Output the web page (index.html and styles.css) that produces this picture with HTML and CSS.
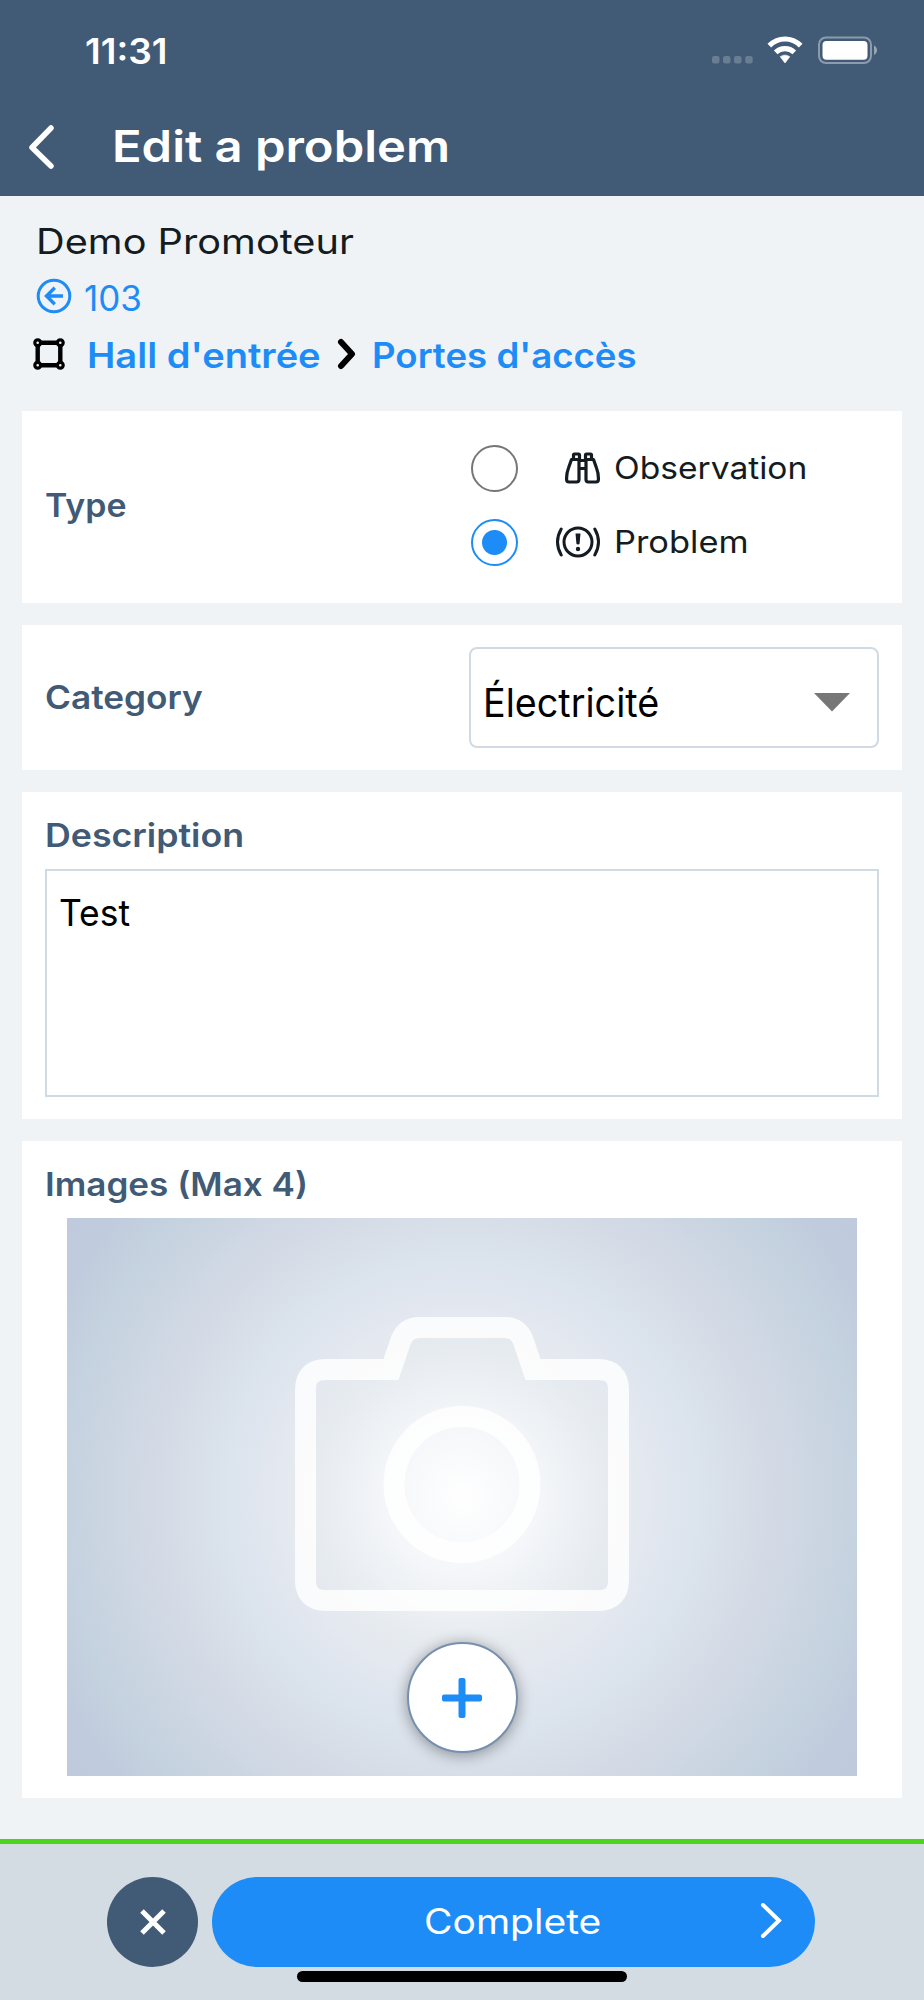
FILE: index.html
```
<!DOCTYPE html>
<html lang="en">
<head>
<meta charset="utf-8">
<title>Edit a problem</title>
<link rel="stylesheet" href="styles.css">
</head>
<body>
<header class="header">
  <div class="status">
    <span class="time">11:31</span>
    <svg class="status-icons" width="166" height="30" viewBox="0 0 166 30">
      <g fill="#fff" fill-opacity=".22">
        <rect x="1" y="20" width="7.5" height="7.5" rx="2.2"/><rect x="12" y="20" width="7.5" height="7.5" rx="2.2"/><rect x="23" y="20" width="7.5" height="7.5" rx="2.2"/><rect x="34.200" y="20" width="7.500" height="7.500" rx="2.2"/>
      </g>
      <g fill="none" stroke="#fff" stroke-width="5.200">
        <path d="M58.300 9.600C67.500.800 80.500.800 89.700 9.600"/>
        <path d="M64.700 16.300C70 11.400 78 11.400 83.300 16.300"/>
      </g>
      <path d="M69.200 20.700C72 18.600 76 18.600 78.800 20.700L74 27z" fill="#fff" stroke="#fff" stroke-width=".6"/>
      <rect x="108" y="1.500" width="52" height="25.500" rx="7" fill="none" stroke="#fff" stroke-opacity=".4" stroke-width="2"/>
      <rect x="111.500" y="5" width="45" height="18.700" rx="4" fill="#fff"/>
      <path d="M163 9.600C167 11.500 167 17 163 18.900z" fill="#fff" fill-opacity=".45"/>
    </svg>
  </div>
  <div class="nav">
    <svg class="back" width="30" height="46" viewBox="0 0 30 46"><path d="M23 4L4 23.500L23 42" fill="none" stroke="#fff" stroke-width="5.500" stroke-linecap="round" stroke-linejoin="round"/></svg>
    <h1 class="title">Edit a problem</h1>
  </div>
</header>

<main class="content">
  <section class="crumbs">
    <div class="row project"><span class="project-name">Demo Promoteur</span></div>
    <div class="row unit">
      <svg width="36" height="36" viewBox="0 0 36 36" fill="none" stroke="#1e8cf6" stroke-width="3"><circle cx="18" cy="18" r="15.800"/><path d="M27 18H11M18.800 9.700L10.500 18L18.800 26.300" stroke-width="3.400"/></svg>
      <span class="unit-no">103</span>
    </div>
    <div class="row path">
      <svg class="area" width="32" height="32" viewBox="0 0 32 32" fill="none" stroke="#000"><path d="M4.700 4.700H27.300V27.300H4.700z" stroke-width="4.400"/><g fill="#f0f3f6" stroke-width="3.200"><circle cx="4.700" cy="4.700" r="2.900"/><circle cx="27.300" cy="4.700" r="2.900"/><circle cx="4.700" cy="27.300" r="2.900"/><circle cx="27.300" cy="27.300" r="2.900"/></g></svg>
      <a class="hall">Hall d'entrée</a>
      <svg class="sep" width="20" height="32" viewBox="0 0 20 32"><path d="M4 4L15 16L4 28" fill="none" stroke="#000" stroke-width="6" stroke-linecap="round" stroke-linejoin="round"/></svg>
      <a class="door">Portes d'accès</a>
    </div>
  </section>

  <section class="card type-card">
    <h2 class="label type">Type</h2>
    <div class="options">
      <div class="option">
        <span class="radio"></span>
        <svg class="opt-icon" width="46" height="34" viewBox="0 0 46 34" fill="none" stroke="#141c22" stroke-width="3.200" stroke-linejoin="round"><path d="M16.500 8.500L13.500 17Q11.600 22 11.600 27V28.500Q11.600 31 14 31H21.500Q24 31 24 28.500V8.500zM38.500 8.500L41.500 17Q43.400 22 43.400 27V28.500Q43.400 31 41 31H33.500Q31 31 31 28.500V8.500zM18.500 8V4Q18.500 3 19.500 3H23.500Q24.500 3 24.500 4V8M30.500 8V4Q30.500 3 31.500 3H35.500Q36.500 3 36.500 4V8M24 9.500H31M24 17.500H31"/></svg>
        <span class="obs">Observation</span>
      </div>
      <div class="option">
        <span class="radio checked"></span>
        <svg class="opt-icon" width="46" height="34" viewBox="0 0 46 34" fill="none" stroke="#141c22" stroke-width="3" stroke-linecap="round"><circle cx="23" cy="17" r="14"/><path d="M6.200 4Q-1.200 17 6.200 30M39.800 4Q47.200 17 39.800 30"/><path d="M20.500 8.600H25.500L24.600 18.500Q24.500 19.500 23 19.500Q21.500 19.500 21.400 18.500z" fill="#141c22" stroke="none"/><circle cx="23" cy="24" r="2.200" fill="#141c22" stroke="none"/></svg>
        <span class="prob">Problem</span>
      </div>
    </div>
  </section>

  <section class="card category-card">
    <h2 class="label category">Category</h2>
    <div class="select">
      <span class="value">Électricité</span>
      <svg width="36" height="19" viewBox="0 0 36 19"><path d="M0 0H36L18 18.500z" fill="#777"/></svg>
    </div>
  </section>

  <section class="card description-card">
    <h2 class="label description">Description</h2>
    <div class="textarea"><span class="test">Test</span></div>
  </section>

  <section class="card images-card">
    <h2 class="label images">Images (Max 4)</h2>
    <div class="photo">
      <svg class="camera" width="336" height="296" viewBox="0 0 336 296" fill="none" stroke="#fff" stroke-opacity=".82" stroke-width="21">
        <path d="M97 53.500L107 24Q112.500 11.500 125 11.500H211Q223.500 11.500 229 24L239 53.500H304Q324.500 53.500 324.500 74V264Q324.500 284.500 304 284.500H32Q11.500 284.500 11.500 264V74Q11.500 53.500 32 53.500z"/>
        <circle cx="168" cy="168.500" r="68"/>
      </svg>
      <button class="add" aria-label="Add image"><svg width="42" height="42" viewBox="0 0 42 42" fill="#1e8cf6"><rect x="17.500" y="1" width="7" height="40" rx="2"/><rect x="1" y="17.500" width="40" height="7" rx="2"/></svg></button>
    </div>
  </section>
</main>

<footer class="footer">
  <div class="actions">
    <button class="cancel" aria-label="Cancel"><svg width="28" height="28" viewBox="0 0 28 28" stroke="#fff" stroke-width="5"><path d="M3 3L25 25M25 3L3 25"/></svg></button>
    <button class="complete"><span class="complete-text">Complete</span><svg class="next" width="24" height="38" viewBox="0 0 24 38"><path d="M4 4L20 19.500L4 35" fill="none" stroke="#fff" stroke-width="4" stroke-linecap="round" stroke-linejoin="miter"/></svg></button>
  </div>
  <div class="home"></div>
</footer>
</body>
</html>
```

FILE: styles.css
```
* { box-sizing: border-box; }
body {
  margin: 0;
  width: 924px;
  height: 2000px;
  display: flex;
  flex-direction: column;
  overflow: hidden;
  background: #f0f3f6;
  color: #141c22;
  font-family: Inter, "Liberation Sans", sans-serif;
}
svg { display: block; flex: none; }
h1, h2 { margin: 0; white-space: nowrap; }
button { border: 0; padding: 0; font: inherit; }

/* Widened letterforms */
.time, .title, .project-name, .hall, .door, .obs, .prob, .label, .value, .test, .complete-text {
  display: inline-block;
  width: max-content;
  transform-origin: 0 50%;
}
.time { transform: scaleX(1.06); }
.title { transform: scaleX(1.112); }
.project-name { transform: scaleX(1.135); }
.hall { transform: scaleX(1.087); }
.door { transform: scaleX(1.046); }
.obs { transform: scaleX(1.083); }
.prob { transform: scaleX(1.11); }
.type { transform: scaleX(1.06); }
.category { transform: scaleX(1.1); }
.description { transform: scaleX(1.116); }
.images { transform: scaleX(1.096); }
.value { transform: scaleX(.967); }
.test { transform: scaleX(.957); }
.complete-text { transform: scaleX(1.115); }

.header { height: 196px; background: #415a75; color: #fff; flex: none; }
.status { height: 101px; display: flex; align-items: center; justify-content: space-between; padding: 0 47px 0 85px; }
.time { font-size: 35px; font-weight: 600; }
.nav { height: 90px; display: flex; align-items: center; }
.back { margin-left: 28px; margin-top: 2px; }
.title { margin-left: 54px; font-size: 44px; font-weight: 600; }

.content { flex: 1; padding: 16px 22px 0; }
.crumbs { margin-bottom: 28px; }
.row { height: 57px; display: flex; align-items: center; font-size: 35px; white-space: nowrap; }
.project { padding-left: 14px; }
.unit { padding-left: 14px; color: #1e8cf6; }
.unit svg { margin-top: -3px; }
.unit-no { margin-left: 12px; }
.path { padding-left: 11px; color: #1e8cf6; font-weight: 600; }
.area { margin-top: -2px; }
.hall { margin-left: 22px; width: 234px; }
.sep { margin-left: 16px; margin-top: -2px; }
.door { margin-left: 15px; }

.card { width: 880px; background: #fff; margin-bottom: 22px; padding: 0 23px; }
.label { color: #415a75; font-size: 32px; font-weight: 600; }
.type-card { height: 192px; display: flex; align-items: center; justify-content: space-between; }
.type-card .label { padding-bottom: 3px; }
.options { width: 408px; display: flex; flex-direction: column; gap: 27px; padding-bottom: 4px; }
.option { height: 47px; display: flex; align-items: center; font-size: 31px; }
.obs, .prob { margin-top: -1px; }
.radio { width: 47px; height: 47px; border: 2px solid #777; border-radius: 50%; flex: none; }
.checked { border-color: #1e8cf6; background: radial-gradient(circle, #1e8cf6 12px, transparent 13px); }
.opt-icon { margin: 0 13px 0 37px; }
.category-card { height: 145px; display: flex; align-items: center; justify-content: space-between; }
.select { width: 410px; height: 101px; margin-top: -1px; border: 2px solid #d1dae2; border-radius: 8px; display: flex; align-items: center; justify-content: space-between; padding: 10px 27px 0 12px; }
.value { color: #000; font-size: 39px; }
.description-card { height: 327px; padding-top: 23px; }
.description-card .label, .images-card .label { display: block; line-height: 42px; }
.textarea { height: 228px; margin-top: 12px; border: 2px solid #d1dae2; padding: 19px 12px; color: #000; font-size: 37px; line-height: 46px; }
.images-card { height: 657px; padding-top: 23px; }
.photo {
  width: 790px; height: 558px; margin: 12px 22px 0;
  padding: 98px 0 23px;
  display: flex; flex-direction: column; align-items: center; justify-content: space-between;
  background: radial-gradient(circle at 50% 50%, #fff 0, #f4f6f9 16%, #e6ebef 31%, #e4e8f0 38%, #dce4ed 48%, #d3dae5 64%, #c5d2df 82%, #c0ccdd 92%, #bfcadd 100%);
}
.add { width: 111px; height: 111px; border: 2px solid #7790ad; border-radius: 50%; background: #fff; display: flex; align-items: center; justify-content: center; box-shadow: 0 2px 15px rgba(0,0,0,.38); }

.footer { height: 161px; flex: none; background: #d3dbe3; border-top: 5px solid #4dd41c; padding-top: 33px; }
.actions { display: flex; gap: 14px; padding-left: 107px; }
.cancel { width: 91px; height: 90px; border-radius: 50%; background: #415a75; display: flex; align-items: center; justify-content: center; }
.complete { width: 603px; height: 90px; border-radius: 45px; background: #1e8cf6; color: #fff; font-size: 35px; font-weight: 400; display: flex; align-items: center; padding: 0 32px 0 212px; justify-content: space-between; }
.complete-text { margin-top: -2px; }
.next { margin-top: -4px; }
.home { width: 330px; height: 11px; margin: 4px auto 0; border-radius: 6px; background: #000; }
```
